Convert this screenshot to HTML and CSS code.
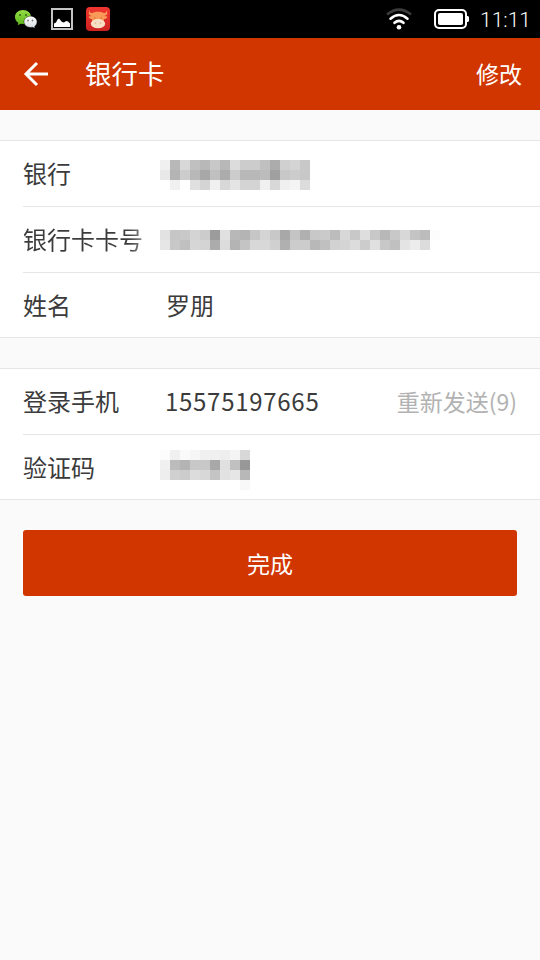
FILE: index.html
```html
<!DOCTYPE html>
<html lang="zh-CN">
<head>
<meta charset="utf-8">
<title>银行卡</title>
<link rel="stylesheet" href="styles.css">
</head>
<body>
<div class="status">
  <svg class="app-icons" width="116" height="38" viewBox="0 0 116 38">
    <defs>
      <linearGradient id="green" x1="0" y1="0" x2="0" y2="1"><stop offset="0" stop-color="#94dc45"/><stop offset="1" stop-color="#5cb51b"/></linearGradient>
      <linearGradient id="pale" x1="0" y1="0" x2="0" y2="1"><stop offset="0" stop-color="#fff"/><stop offset="1" stop-color="#d5dce2"/></linearGradient>
      <linearGradient id="red" x1="0" y1="0" x2="0" y2="1"><stop offset="0" stop-color="#f13630"/><stop offset="1" stop-color="#cd2220"/></linearGradient>
    </defs>
    <path fill="url(#green)" d="M23 10c4.600 0 8 3 8 7s-3.400 7-8 7l-2.300-.3-3 1.500.6-2.500C16.300 21.500 15 19.500 15 17c0-4 3.400-7 8-7z"/>
    <circle cx="20" cy="15" r="1.100" fill="#396b18"/><circle cx="26" cy="15" r="1.100" fill="#396b18"/>
    <path fill="url(#pale)" stroke="#000" stroke-width=".4" d="M30.500 16.200c3.700 0 6.500 2.500 6.500 5.600 0 2-1 3.500-2.400 4.600l.4 1.900-2.500-1.100-2 .2c-3.700 0-6.500-2.500-6.500-5.600s2.800-5.600 6.500-5.600z"/>
    <circle cx="28" cy="20.500" r=".9" fill="#777"/><circle cx="32.500" cy="20.500" r=".9" fill="#777"/>
    <rect x="52" y="9" width="20" height="20" fill="#000" stroke="#c4c4c4" stroke-width="2"/>
    <path fill="#fff" d="M54 27v-3.500l2-1 1.500-3 1.500-1 3 3.500 2 .5 2-1.500 2 .5 2 2V27z"/>
    <rect x="86" y="7" width="24" height="24" rx="4" fill="url(#red)"/>
    <path fill="#fa9a58" d="M90 10.500c-.3 2.500 1 3 3 2.300 1.500-.6 2.500-1 5-1s3.500.4 5 1c2 .7 3.300.2 3-2.300 2.500 3 1 5-2 5.500l3.500.5c-.5 2-2 2.500-3.500 2.500l-.5 4H92.500l-.5-4c-1.500 0-3-.5-3.500-2.500L92 16c-3-.5-4.500-2.500-2-5.500z"/>
    <ellipse cx="98" cy="23.700" rx="7.200" ry="4.600" fill="#f7dfc5"/>
    <path fill="#e77938" d="M94 16.500l2.500 2-2.500.3zM102 16.500l-2.500 2 2.500.3z"/>
    <circle cx="95.500" cy="23" r=".8" fill="#d7a98d"/><circle cx="100.500" cy="23" r=".8" fill="#d7a98d"/>
  </svg>
  <div class="system">
    <svg width="86" height="38" viewBox="384 0 86 38" fill="none">
      <path d="M387 14.500Q399 4.800 411 14.500" stroke="#3c3c3c" stroke-width="2.600"/>
      <path d="M390.500 18.700Q399 11.300 407.500 18.700M394.500 22.800Q399 18.800 403.500 22.800" stroke="#fff" stroke-width="2.600" stroke-linecap="round"/>
      <circle cx="399" cy="27.300" r="2.300" fill="#fff"/>
      <rect x="435" y="10" width="31" height="18" rx="4" stroke="#fff" stroke-width="2"/>
      <rect x="438" y="13" width="25" height="12" rx="2" fill="#fff"/>
      <path fill="#fff" d="M467 16h1l1 1v4l-1 1h-1z"/>
    </svg>
    <time>11:11</time>
  </div>
</div>
<header class="bar">
  <svg class="back" width="26" height="26" viewBox="0 0 26 26" fill="none" stroke="#fff" stroke-width="3"><path d="M14 2L3 13l11 11M3 13h22"/></svg>
  <h1>银行卡</h1>
  <a class="edit">修改</a>
</header>
<main>
  <section class="card">
    <div class="row"><span class="label">银行</span><svg class="mosaic bank" width="150" height="30" data-cells="f0b8d8c0b8c8b8dcccccc0acd0d4c8 e8b4ccb8a8c0acccb8b8bca0c8ccc8 fff0ffe0d4f0d8e4d4d4f0d8f0f4dc"></svg></div>
    <div class="row"><span class="label faded">银行卡卡号</span><svg class="mosaic account" width="280" height="20" data-cells="e2c6c8d4cc9ce0b8b4c6d4c8a8c4b0c8cabcd8c8dec8b8c8d8c4bcfc e6c8c0d6d4acdcb4c4d8d8d0b0ccccb8c0d2d4dccce0c8c0e4ecdcff"></svg></div>
    <div class="row"><span class="label">姓名</span><span class="value">罗朋</span></div>
  </section>
  <section class="card">
    <div class="row"><span class="label">登录手机</span><span class="value number">15575197665</span><span class="resend">重新发送(9)</span></div>
    <div class="row"><span class="label">验证码</span><svg class="mosaic code" width="90" height="40" data-cells="fcf0faf6f0f0eef4d8 f0bcb4c8c8a8e0c098 eed0ccdcd8c4e2e6b8 fffffffffffffffff8"></svg></div>
  </section>
  <button class="submit">完成</button>
</main>
<script src="mosaic.js"></script>
</body>
</html>
```
FILE: styles.css
```css
* { box-sizing: border-box; }
body {
  margin: 0;
  min-height: 960px;
  background: #fafafa;
  color: #3b3b3b;
  font-family: "Noto Sans CJK SC", sans-serif;
}
svg { display: block; flex: none; }
.status {
  height: 38px;
  display: flex;
  justify-content: space-between;
  background: #000;
}
.system { display: flex; align-items: center; }
time {
  width: 70px;
  padding: 2px 0 0 10px;
  color: #fff;
  font: 300 21px/36px Roboto, sans-serif;
  white-space: nowrap;
}
.bar {
  height: 72px;
  padding: 0 18px 0 23px;
  display: flex;
  align-items: center;
  background: #d13500;
  color: #fff;
}
h1 {
  margin: 0 0 3px 36px;
  font-size: 26.5px;
  font-weight: 400;
  line-height: 69px;
}
.edit { margin: 0 0 2px auto; font-size: 23px; line-height: 70px; }
.card {
  margin-top: 30px;
  padding-left: 23px;
  background: #fff;
  border-top: 1px solid #e6e6e6;
  border-bottom: 1px solid #e6e6e6;
}
.row {
  height: 66px;
  padding: 0 23px 2px 0;
  display: flex;
  align-items: center;
  border-bottom: 1px solid #e6e6e6;
  font-size: 24px;
  line-height: 62px;
}
.row:last-child { height: 64px; padding-bottom: 0; border-bottom: 0; }
.label { width: 137px; flex: none; white-space: nowrap; }
.faded {
  background: linear-gradient(90deg, #3b3b3b 105px, #8c8c8c 120px);
  -webkit-background-clip: text;
  background-clip: text;
  color: transparent;
}
.value { margin-left: 6px; }
.number { margin-left: 5px; letter-spacing: .72px; }
.resend { margin-left: auto; color: #b2b2b2; font-size: 23px; white-space: nowrap; }
.bank { margin-top: 5px; }
.account { margin-top: 2px; }
.code { margin-top: 6px; }
.submit {
  display: block;
  width: 494px;
  height: 66px;
  margin: 30px auto 0;
  padding: 0;
  border: 0;
  border-radius: 3px;
  background: #d13500;
  color: #fff;
  font: 23px/66px "Noto Sans CJK SC", sans-serif;
}
```
FILE: mosaic.js
```js
// Each row lists one two-digit grey level per 10px cell.
document.querySelectorAll('.mosaic').forEach(svg => {
  svg.setAttribute('shape-rendering', 'crispEdges');
  svg.dataset.cells.split(' ').forEach((row, y) => {
    row.match(/../g).forEach((grey, x) => {
      const cell = document.createElementNS('http://www.w3.org/2000/svg', 'rect');
      cell.setAttribute('x', x * 10);
      cell.setAttribute('y', y * 10);
      cell.setAttribute('width', 10);
      cell.setAttribute('height', 10);
      cell.setAttribute('fill', '#' + grey.repeat(3));
      svg.appendChild(cell);
    });
  });
});
```
